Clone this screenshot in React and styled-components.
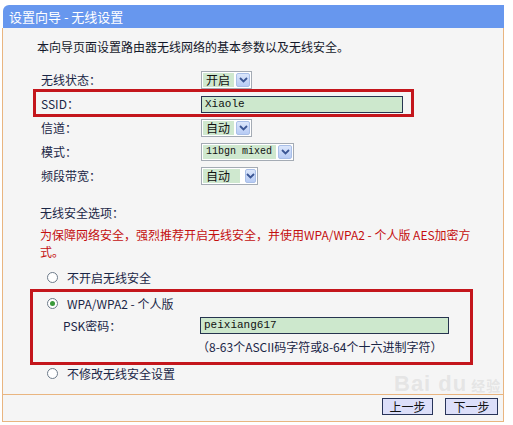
import React from "react";
import styled, { createGlobalStyle } from "styled-components";

const GlobalStyle = createGlobalStyle`
    html, body {
        margin:0;
        padding:0;
        background:#fff;
    }
    body {
        font-family:"Noto Sans CJK SC", "Noto Sans", sans-serif;
        font-size:12px;
        color:#1c2540;
    }
`;

const Panel = styled.div`
    position:relative;
    width:502px;
    margin:5px 0 0 2px;
`;

const Header = styled.div`
    height:23px;
    line-height:23px;
    margin-left:1px;
    padding-left:6px;
    background:#6797ee;
    color:#fff;
    font-size:13px;
    border-top-left-radius:6px;
`;

const Body = styled.div`
    background:#f5f5f5;
    border-left:1px solid #e9b580;
    border-right:1px solid #e9b580;
    border-bottom:1px solid #e9b580;
    padding:10px 0 10px 34px;
`;

const Intro = styled.div`
    line-height:18px;
    color:#14182a;
`;

const Form = styled.div`
    margin-top:12px;
    display:grid;
    grid-template-columns:164px 1fr;
`;

const Row = styled.div`
    display:contents;
`;

const Label = styled.div`
    height:24px;
    line-height:24px;
    padding-left:4px;
    color:#1a2646;
`;

const Cell = styled.div`
    height:24px;
    display:flex;
    align-items:center;
`;

const Marked = styled.div`
    position:relative;
    grid-column:1 / span 2;
    display:grid;
    grid-template-columns:164px 1fr;

    &::after{
        content:"";
        position:absolute;
        left:-4px;
        top:-3px;
        width:381px;
        height:28px;
        border:3px solid #c4161c;
        box-sizing:border-box;
        pointer-events:none;
    }
`;

const SelectBox = styled.div`
    display:flex;
    align-items:center;
    width:${(p) => p.width}px;
    height:18px;
    box-sizing:border-box;
    border:1px solid #a4abb4;
    background:#fff;
    padding:1px;
    gap:${(p) => (p.gap ? p.gap : 2)}px;
`;

const SelectText = styled.div`
    flex:${(p) => (p.fixed ? "none" : "1")};
    width:${(p) => (p.fixed ? p.fixed + "px" : "auto")};
    height:14px;
    line-height:14px;
    background:#cfe8cf;
    color:#111;
    padding-left:3px;
    font-size:${(p) => (p.mono ? "10px" : "12px")};
    font-family:${(p) =>
        p.mono ? "\"Liberation Mono\", monospace" : "\"Noto Sans CJK SC\", sans-serif"};
    white-space:nowrap;
`;

const Arrow = styled.div`
    width:14px;
    height:14px;
    box-sizing:border-box;
    border:1px solid #a9bfe8;
    background:linear-gradient(#dbe6fb, #b7cbf4);
    border-radius:2px;
    display:flex;
    align-items:center;
    justify-content:center;
`;

const TextInput = styled.div`
    width:${(p) => p.width}px;
    height:17px;
    box-sizing:border-box;
    border:1px solid #26344f;
    background:#cde8cd;
    line-height:15px;
    padding-left:3px;
    font-family:"Liberation Mono", monospace;
    font-size:11px;
    color:#111;
`;

const SectionTitle = styled.div`
    margin-top:16px;
    padding-left:3px;
    line-height:18px;
    color:#1a2646;
`;

const Warning = styled.div`
    margin-top:4px;
    padding-left:3px;
    line-height:17px;
    color:#c40f0f;
    white-space:nowrap;
`;

const RadioRow = styled.div`
    display:flex;
    align-items:center;
    height:22px;
    margin-top:${(p) => p.top || 0}px;
    padding-left:10px;
    gap:9px;
    color:#1a2646;
`;

const Radio = styled.span`
    width:11px;
    height:11px;
    box-sizing:border-box;
    border-radius:50%;
    border:1px solid #6d7b8a;
    background:#fff;
    display:flex;
    align-items:center;
    justify-content:center;

    &::after{
        content:"";
        width:5px;
        height:5px;
        border-radius:50%;
        background:${(p) => (p.checked ? "#3a9a3a" : "transparent")};
    }
`;

const Group = styled.div`
    position:relative;

    &::after{
        content:"";
        position:absolute;
        left:-7px;
        top:-3px;
        width:443px;
        height:76px;
        border:3px solid #c4161c;
        box-sizing:border-box;
        pointer-events:none;
    }
`;

const FieldRow = styled.div`
    display:flex;
    align-items:center;
    height:${(p) => p.height || 22}px;
    padding-left:${(p) => p.indent}px;
    color:#1a2646;
`;

const FieldLabel = styled.div`
    width:137px;
`;

const Footer = styled.div`
    display:flex;
    justify-content:flex-end;
    gap:12px;
    padding:3px 5px 6px 0;
    background:#f5f5f5;
    border-left:1px solid #e9b580;
    border-right:1px solid #e9b580;
    border-bottom:1px solid #e9b580;
`;

const Button = styled.button`
    width:${(p) => p.width}px;
    height:17px;
    padding:0;
    border:1px solid #283459;
    background:#dcdff9;
    font-family:"Noto Sans CJK SC", sans-serif;
    font-size:12px;
    line-height:15px;
    color:#111;
`;

const Watermark = styled.div`
    position:absolute;
    left:392px;
    top:366px;
    font-family:"Liberation Sans", sans-serif;
    font-size:22px;
    font-weight:bold;
    color:rgba(215,215,215,0.55);
    letter-spacing:1px;
    pointer-events:none;

    span{
        font-family:"Noto Sans CJK SC", sans-serif;
        font-size:14px;
        margin-left:4px;
    }
`;

const Chevron = () => (
    <svg width="9" height="6" viewBox="0 0 9 6">
        <path d="M1 1 L4.5 4.5 L8 1" fill="none" stroke="#3b5694" strokeWidth="1.8" />
    </svg>
);

const Select = ({ width, text, mono, fixed, gap }) => (
    <SelectBox width={width} gap={gap}>
        <SelectText mono={mono} fixed={fixed}>{text}</SelectText>
        <Arrow><Chevron /></Arrow>
    </SelectBox>
);

const App = () => {
    return (
        <>
            <GlobalStyle />
            <Panel>
                <Header>设置向导 - 无线设置</Header>
                <Body>
                    <Intro>本向导页面设置路由器无线网络的基本参数以及无线安全。</Intro>
                    <Form>
                        <Row>
                            <Label>无线状态：</Label>
                            <Cell><Select width={51} text="开启" /></Cell>
                        </Row>
                        <Marked>
                            <Label>SSID：</Label>
                            <Cell><TextInput width={202}>Xiaole</TextInput></Cell>
                        </Marked>
                        <Row>
                            <Label>信道：</Label>
                            <Cell><Select width={51} text="自动" /></Cell>
                        </Row>
                        <Row>
                            <Label>模式：</Label>
                            <Cell><Select width={93} text="11bgn mixed" mono /></Cell>
                        </Row>
                        <Row>
                            <Label>频段带宽：</Label>
                            <Cell><Select width={57} text="自动" fixed={34} gap={5} /></Cell>
                        </Row>
                    </Form>
                    <SectionTitle>无线安全选项：</SectionTitle>
                    <Warning>
                        为保障网络安全，强烈推荐开启无线安全，并使用WPA/WPA2 - 个人版 AES加密方
                        <br />
                        式。
                    </Warning>
                    <RadioRow top={6}>
                        <Radio />
                        不开启无线安全
                    </RadioRow>
                    <Group>
                        <RadioRow top={4}>
                            <Radio checked />
                            WPA/WPA2 - 个人版
                        </RadioRow>
                        <FieldRow indent={26}>
                            <FieldLabel>PSK密码：</FieldLabel>
                            <TextInput width={249}>peixiang617</TextInput>
                        </FieldRow>
                        <FieldRow indent={160} height={20}>
                            （8-63个ASCII码字符或8-64个十六进制字符）
                        </FieldRow>
                    </Group>
                    <RadioRow top={6}>
                        <Radio />
                        不修改无线安全设置
                    </RadioRow>
                </Body>
                <Footer>
                    <Button width={51}>上一步</Button>
                    <Button width={53}>下一步</Button>
                </Footer>
                <Watermark>Bai du<span>经验</span></Watermark>
            </Panel>
        </>
    );
};

export default App;
